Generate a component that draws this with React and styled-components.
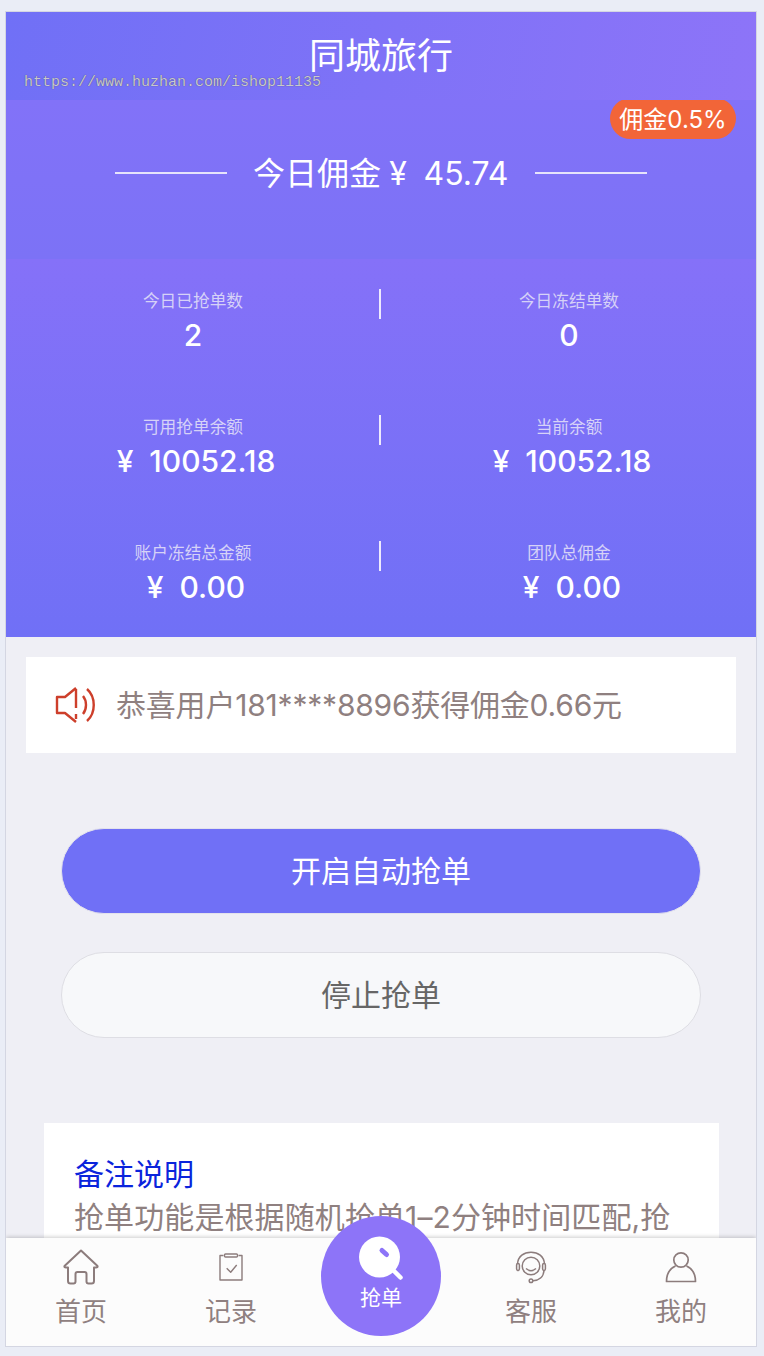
import React from "react";
import styled, { createGlobalStyle } from "styled-components";

const GlobalStyle = createGlobalStyle`
  html, body {
    margin: 0;
    padding: 0;
    background: #eaedf6;
    font-family: "Inter", "Noto Sans CJK SC", sans-serif;
  }
  * { box-sizing: border-box; }
`;

const stats = [
  { left: { label: "今日已抢单数", value: "2" }, right: { label: "今日冻结单数", value: "0" } },
  { left: { label: "可用抢单余额", value: "¥  10052.18", money: true }, right: { label: "当前余额", value: "¥  10052.18", money: true } },
  { left: { label: "账户冻结总金额", value: "¥  0.00", money: true }, right: { label: "团队总佣金", value: "¥  0.00", money: true } },
];

function HomeIcon() {
  return (
    <NavSvg width="38" height="38" viewBox="0 0 38 38" $stroke={2}>
      <path d="M19 1.5 L2.5 17 Q2 18.5 4 18.5 L6 18.5 L6 32 Q6 34.5 8.5 34.5 L11.5 34.5 Q13.5 34.5 13.5 32.5 L13.5 25 Q13.5 23 15.5 23 L22.5 23 Q24.5 23 24.5 25 L24.5 32.5 Q24.5 34.5 26.5 34.5 L29.5 34.5 Q32 34.5 32 32 L32 18.5 L34 18.5 Q36 18.5 35.5 17 Z" />
    </NavSvg>
  );
}

function RecordIcon() {
  return (
    <NavSvg width="38" height="38" viewBox="0 0 38 38" $stroke={1.4}>
      <path d="M11.5 6.5 L8 6.5 L8 31 L30 31 L30 6.5 L26.5 6.5" />
      <rect x="12.5" y="5" width="13" height="3" rx="1" />
      <path d="M14.7 19.3 L18.7 23.3 L24.7 16" />
    </NavSvg>
  );
}

function ServiceIcon() {
  return (
    <NavSvg width="38" height="38" viewBox="0 0 38 38" $stroke={1.5}>
      <path d="M5.5 15 C6 7 12 3.2 19 3.2 C26 3.2 32 7 32.5 15" />
      <circle cx="19" cy="17" r="8.8" />
      <path d="M14 19.5 Q19 24 24 19.5" />
      <rect x="4.6" y="14.5" width="2.8" height="7" rx="1.4" />
      <rect x="30.6" y="14.5" width="2.8" height="7" rx="1.4" />
      <path d="M32 21.5 C31.5 28 27 31.5 21 31.7" />
      <circle cx="19" cy="31.7" r="1.8" />
    </NavSvg>
  );
}

function UserIcon() {
  return (
    <NavSvg width="38" height="38" viewBox="0 0 38 38" $stroke={1.7}>
      <circle cx="19" cy="11" r="7.2" />
      <path d="M13.5 17 C8 19.5 4.5 25 4.5 32.5 L33.5 32.5 C33.5 25 30 19.5 24.5 17" />
    </NavSvg>
  );
}

function App() {
  return (
    <>
      <GlobalStyle />
      <Frame>
        <Header>
          <Title>同城旅行</Title>
          <Watermark>https://www.huzhan.com/ishop11135</Watermark>
        </Header>

        <Earnings>
          <RateBadge>佣金0.5%</RateBadge>
          <EarningsRow>
            <Rule />
            <EarningsText>今日佣金 ¥&nbsp; 45.74</EarningsText>
            <Rule />
          </EarningsRow>
        </Earnings>

        <Stats>
          {stats.map((row) => (
            <StatRow key={row.left.label}>
              <StatCell>
                <StatLabel>{row.left.label}</StatLabel>
                <StatValue $money={row.left.money}>{row.left.value}</StatValue>
              </StatCell>
              <StatDivider />
              <StatCell>
                <StatLabel>{row.right.label}</StatLabel>
                <StatValue $money={row.right.money}>{row.right.value}</StatValue>
              </StatCell>
            </StatRow>
          ))}
        </Stats>

        <Notice>
          <svg width="42" height="38" viewBox="0 0 42 38" fill="none" stroke="#cd3f2b" strokeWidth="2.4">
            <path d="M21 2 L10 11 L2 11 L2 27 L10 27 L21 36" strokeLinejoin="round" />
            <path d="M21 3 L21 22 M21 28 L21 33" />
            <path d="M28 10 C32 15 32 23 28 28" />
            <path d="M32 3 C41 11 41 27 32 35" />
          </svg>
          <NoticeText>恭喜用户181****8896获得佣金0.66元</NoticeText>
        </Notice>

        <Actions>
          <ActionButton $primary>开启自动抢单</ActionButton>
          <ActionButton>停止抢单</ActionButton>
        </Actions>

        <Remark>
          <RemarkTitle>备注说明</RemarkTitle>
          <RemarkText>抢单功能是根据随机抢单1–2分钟时间匹配,抢</RemarkText>
        </Remark>

        <TabBar>
          <Tab>
            <HomeIcon />
            <TabLabel>首页</TabLabel>
          </Tab>
          <Tab>
            <RecordIcon />
            <TabLabel>记录</TabLabel>
          </Tab>
          <Tab />
          <Tab>
            <ServiceIcon />
            <TabLabel>客服</TabLabel>
          </Tab>
          <Tab>
            <UserIcon />
            <TabLabel>我的</TabLabel>
          </Tab>
          <GrabButton>
            <svg width="46" height="50" viewBox="0 0 46 50">
              <circle cx="21.5" cy="22" r="20.5" fill="#fff" />
              <path d="M35 35 L42.5 42.5" stroke="#fff" strokeWidth="4.5" strokeLinecap="round" />
              <path d="M24 15.5 L28.5 19.5" stroke="#8d74f8" strokeWidth="5" strokeLinecap="round" />
            </svg>
            <GrabLabel>抢单</GrabLabel>
          </GrabButton>
        </TabBar>
      </Frame>
    </>
  );
}

const Frame = styled.div`
  position: relative;
  width: 752px;
  height: 1336px;
  margin: 11px 0 0 5px;
  border: 1px solid #d4d6e2;
  background: #efeff5;
  overflow: hidden;
`;
const Header = styled.div`
  position: relative;
  height: 88px;
  background: linear-gradient(100deg, #7070f6, #8d74f8);
  display: flex;
  justify-content: center;
  padding-top: 22px;
`;
const Title = styled.div`
  font-size: 36px;
  line-height: 44px;
  color: #fff;
`;
const Watermark = styled.div`
  position: absolute;
  left: 18px;
  top: 60px;
  font-family: "Liberation Mono", monospace;
  font-size: 15px;
  line-height: 22px;
  color: #c8c8d2;
  text-shadow: 0 0 1px #444458;
`;
const Earnings = styled.div`
  position: relative;
  height: 159px;
  overflow: hidden;
  background: linear-gradient(180deg, #8272f8, #7c72f6);
  padding-top: 52px;
`;
const RateBadge = styled.div`
  position: absolute;
  top: -2px;
  right: 20px;
  width: 126px;
  height: 41px;
  border-radius: 21px;
  padding-top: 2px;
  background: #f26538;
  color: #fff;
  font-size: 24px;
  line-height: 39px;
  text-align: center;
`;
const EarningsRow = styled.div`
  display: flex;
  align-items: center;
  justify-content: center;
  height: 44px;
  gap: 28px;
`;
const Rule = styled.div`
  width: 112px;
  height: 2px;
  margin-bottom: 2px;
  background: #e6e3fb;
`;
const EarningsText = styled.div`
  width: 252px;
  margin-left: -2px;
  margin-right: 2px;
  font-size: 32px;
  line-height: 44px;
  word-spacing: -0.7px;
  color: #fff;
  white-space: nowrap;
`;
const Stats = styled.div`
  height: 378px;
  background: linear-gradient(180deg, #8571f8, #7070f6);
  padding-top: 27px;
  display: flex;
  flex-direction: column;
  gap: 66px;
`;
const StatRow = styled.div`
  display: flex;
  align-items: flex-start;
  height: 60px;
`;
const StatCell = styled.div`
  flex: 1;
  display: flex;
  flex-direction: column;
  align-items: center;
`;
const StatDivider = styled.div`
  width: 2px;
  height: 30px;
  margin: 3px 1px 0 -1px;
  background: #eeeafd;
`;
const StatLabel = styled.div`
  font-size: 16.7px;
  line-height: 30px;
  color: #d6d2f7;
`;
const StatValue = styled.div`
  margin-top: 1px;
  padding-left: ${(p) => (p.$money ? "6px" : "0")};
  font-size: 30px;
  font-weight: 500;
  line-height: 36px;
  color: #fff;
  white-space: pre;
`;
const Notice = styled.div`
  margin: 20px 20px 0;
  height: 96px;
  background: #fff;
  display: flex;
  align-items: center;
  padding-left: 29px;
  gap: 19px;
`;
const NoticeText = styled.div`
  margin-top: -4px;
  font-size: 30px;
  letter-spacing: -0.2px;
  color: #8f8080;
`;
const Actions = styled.div`
  display: flex;
  flex-direction: column;
  gap: 38px;
  margin: 75px 55px 0;
`;
const ActionButton = styled.div`
  height: 86px;
  border-radius: 43px;
  border: 1px solid ${(p) => (p.$primary ? "#e3e2ec" : "#dedee4")};
  background: ${(p) => (p.$primary ? "#7070f6" : "#f7f8fa")};
  color: ${(p) => (p.$primary ? "#fff" : "#666")};
  font-size: 30px;
  line-height: 84px;
  text-align: center;
`;
const Remark = styled.div`
  margin: 85px 37px 0 38px;
  height: 300px;
  background: #fff;
  padding: 31px 30px 0;
`;
const RemarkTitle = styled.div`
  font-size: 30px;
  line-height: 40px;
  color: #0a24dc;
`;
const RemarkText = styled.div`
  font-size: 30px;
  line-height: 46px;
  letter-spacing: 0.1px;
  color: #8f8080;
  white-space: nowrap;
`;
const TabBar = styled.div`
  position: absolute;
  left: 0;
  right: 0;
  bottom: 0;
  height: 108px;
  background: #fcfcfc;
  box-shadow: 0 -1px 4px rgba(0, 0, 0, 0.2);
  display: grid;
  grid-template-columns: repeat(5, 150px);
`;
const Tab = styled.div`
  display: flex;
  flex-direction: column;
  align-items: center;
  padding-top: 11px;
`;
const NavSvg = styled.svg`
  fill: none;
  stroke: #8c7c7c;
  stroke-width: ${(p) => p.$stroke};
  stroke-linejoin: round;
`;
const TabLabel = styled.div`
  font-size: 26px;
  line-height: 36px;
  margin-top: 7px;
  color: #8f8080;
`;
const GrabButton = styled.div`
  position: absolute;
  left: 315px;
  top: -22px;
  width: 120px;
  height: 120px;
  border-radius: 50%;
  background: #8d74f8;
  display: flex;
  flex-direction: column;
  align-items: center;
  padding-top: 19px;
`;
const GrabLabel = styled.div`
  font-size: 21px;
  line-height: 28px;
  color: #fff;
  margin-top: -1px;
`;

export default App;
